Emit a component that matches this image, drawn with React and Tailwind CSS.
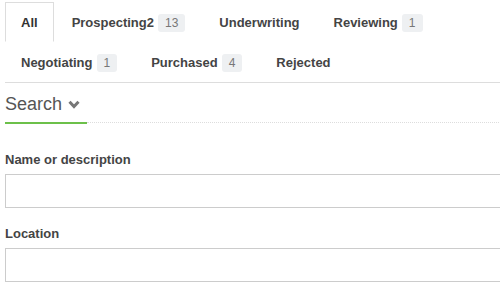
import React from "react";

const tabs = [
  { label: "All", active: true },
  { label: "Prospecting2", count: 13 },
  { label: "Underwriting" },
  { label: "Reviewing", count: 1 },
  { label: "Negotiating", count: 1 },
  { label: "Purchased", count: 4 },
  { label: "Rejected" },
];

const Tab = ({ label, count, active }) => (
  <li
    className={
      "mr-[2px] flex h-[40px] items-center border px-[15px] pt-[2px] text-[13px] font-bold " +
      (active
        ? "border-[#ddd] border-b-transparent bg-white text-[#333]"
        : "border-transparent text-[#444]")
    }
  >
    {label}
    {count !== undefined && (
      <span className="ml-[4px] inline-flex h-[18px] items-center rounded-[3px] bg-[#eef0f2] px-[7px] text-[12px] font-normal text-[#777]">
        {count}
      </span>
    )}
  </li>
);

const Field = ({ label }) => (
  <div className="mb-[16px]">
    <label className="mb-[5px] block pt-[1px] text-[13px] leading-[18px] font-bold text-[#444]">
      {label}
    </label>
    <input
      type="text"
      className="block h-[34px] w-full border border-[#ccc] bg-white outline-none"
    />
  </div>
);

export default function App() {
  return (
    <div className="h-[300px] w-[500px] overflow-hidden bg-white font-['Liberation_Sans',Arial,sans-serif]">
      <div className="ml-[5px] w-[520px]">
        <ul className="flex flex-wrap border-b border-[#ddd] pt-[2px]">
          {tabs.map((t) => (
            <Tab key={t.label} {...t} />
          ))}
        </ul>

        <div className="mt-[9px] flex items-end">
          <div className="flex items-center gap-[6px] border-b-2 border-[#6cc04a] pb-[6px] pr-[7px]">
            <span className="text-[18px] leading-[24px] text-[#555]">Search</span>
            <svg width="12" height="9" viewBox="0 0 12 9" className="mt-[1px]">
              <path
                d="M1.5 1.8 L6 6.5 L10.5 1.8"
                fill="none"
                stroke="#777"
                strokeWidth="3"
              />
            </svg>
          </div>
          <div className="mb-[1px] flex-1 border-b border-dotted border-[#ddd]" />
        </div>

        <div className="pt-[26px]">
          <Field label="Name or description" />
          <Field label="Location" />
        </div>
      </div>
    </div>
  );
}
